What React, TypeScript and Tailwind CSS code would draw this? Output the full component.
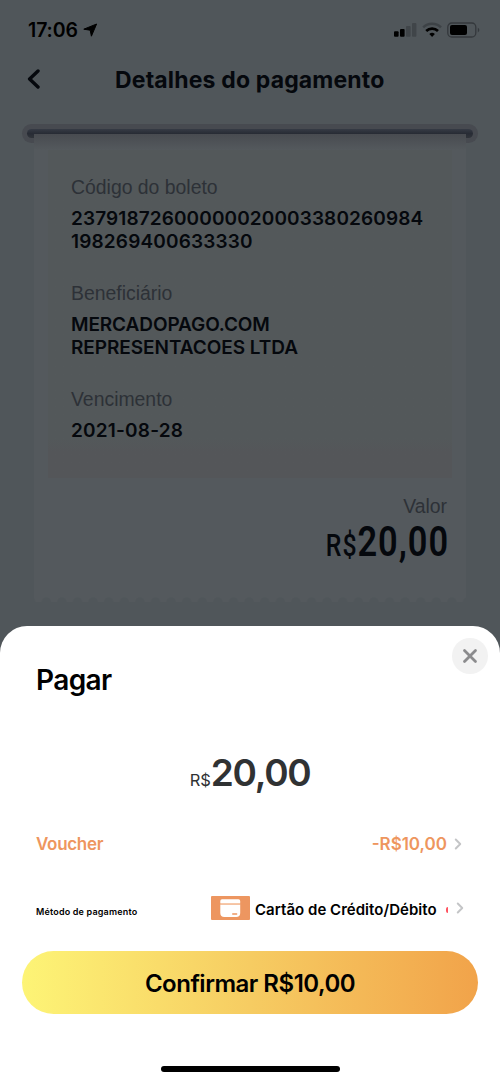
import { ChevronRight, X } from 'lucide-react';
import type { ReactNode } from 'react';

type FieldProps = {
  label: string;
  children: ReactNode;
};

function StatusBar() {
  return (
    <div className="flex h-[60px] items-center justify-between pl-7 pr-5">
      <div className="flex items-center">
        <span className="text-[19.5px] font-semibold leading-6 tracking-[-0.1px] text-black">17:06</span>
        <svg className="ml-[5px]" width="15" height="14" viewBox="0 0 15 14">
          <path d="M.8 6.2 13.6 1 8.4 13.2 7.2 7.2Z" fill="#000" stroke="#000" strokeWidth="1" strokeLinejoin="round" />
        </svg>
      </div>
      <svg width="87" height="16" viewBox="0 0 87 16">
        <rect x="1" y="9.3" width="4.6" height="5.4" rx="1" fill="#000" />
        <rect x="7" y="7" width="4.6" height="7.7" rx="1" fill="#000" />
        <rect x="13" y="4" width="4.6" height="10.7" rx="1" fill="#404549" />
        <rect x="19" y="1" width="4.4" height="13.7" rx="1" fill="#404549" />
        <path d="M30.2 5.4a12.8 12.8 0 0 1 17.8 0" fill="none" stroke="#3d4246" strokeWidth="2.5" />
        <path d="M33.2 9a8.6 8.6 0 0 1 11.8 0" fill="none" stroke="#000" strokeWidth="2.7" />
        <path d="M36.3 12.1a4 4 0 0 1 5.6 0L39.1 15Z" fill="#000" />
        <rect x="54.8" y="1" width="28" height="14" rx="4" fill="none" stroke="#34383c" strokeWidth="1.3" />
        <rect x="57" y="3.1" width="17" height="9.9" rx="2" fill="#000" />
        <path d="M84.8 5.8v4.6q1.6-.8 1.6-2.3t-1.6-2.3" fill="#34383c" />
      </svg>
    </div>
  );
}

function Field({ label, children }: FieldProps) {
  return (
    <div className="mb-[27px]">
      <div className="mb-[7px] h-[26px] font-['Liberation_Sans',sans-serif] text-[19.4px] leading-[26px] text-[#2d3137]">
        {label}
      </div>
      <div className="text-[19px] font-semibold leading-[23px] text-[#05080d]">{children}</div>
    </div>
  );
}

function Receipt() {
  return (
    <div className="mx-[22px] mt-[24px]">
      <div className="-mb-[9px] h-[19px] rounded-full bg-[#474a50] px-[5px] pt-[5px]">
        <div className="h-[9px] rounded-full bg-linear-to-b from-[#363b45] via-[#282c35] to-[#30343a]" />
      </div>
      <div className="relative mx-3 h-[468px] bg-[#54595d] px-[14px] pt-4">
        <div className="absolute inset-x-0 top-0 h-4 bg-linear-to-b from-[#484b50] to-transparent" />
        <div className="h-[328px] bg-linear-to-b from-[#53585a] from-88% to-[#545659] to-92% pl-[23px] pt-6">
          <Field label="Código do boleto">
            <div className="tracking-[0.11px]">23791872600000020003380260984</div>
            <div className="tracking-[0.17px]">198269400633330</div>
          </Field>
          <Field label="Beneficiário">
            <div className="tracking-[-0.1px]">MERCADOPAGO.COM</div>
            <div className="tracking-[-0.05px]">REPRESENTACOES LTDA</div>
          </Field>
          <Field label="Vencimento">
            <div className="tracking-[0.2px]">2021-08-28</div>
          </Field>
        </div>
        <div className="pr-[5px] text-right">
          <div className="mt-[15px] font-['Liberation_Sans',sans-serif] text-[19.4px] leading-[26px] text-[#2d3137]">
            Valor
          </div>
          <div className="-mr-[2px] origin-right scale-x-[0.8] font-[Roboto,sans-serif] text-[43px] font-semibold leading-[44px] tracking-[1.2px] text-[#05080d]">
            <span className="text-[31px] font-medium">R$</span>20,00
          </div>
        </div>
        <svg className="absolute bottom-0 left-0" width="432" height="6" viewBox="0 0 432 6">
          <defs>
            <pattern id="teeth" x="4.5" width="15.6" height="6" patternUnits="userSpaceOnUse">
              <circle cx="7.8" cy="6" r="4.8" fill="#50565a" />
            </pattern>
          </defs>
          <rect width="432" height="6" fill="url(#teeth)" />
        </svg>
      </div>
    </div>
  );
}

function CardIcon() {
  return (
    <svg width="39" height="24" viewBox="0 0 39 24">
      <rect width="39" height="24" rx="1" fill="#ed9660" />
      <path d="M9.3 7V5q0-1.7 1.7-1.7h16.5Q29.2 3.3 29.2 5v2z" fill="#fff" />
      <path d="M9.3 8.8h19.9V17q0 4-4 4H13.3q-4 0-4-4z" fill="#fff" />
      <path d="M9.3 7h19.9v1.8H9.3z" fill="#f7c9aa" />
      <path d="M21.7 18h4" stroke="#ed9660" strokeWidth="1.3" strokeLinecap="round" />
    </svg>
  );
}

function PaymentSheet() {
  return (
    <div className="relative h-[456px] rounded-t-[27px] bg-white">
      <button
        aria-label="Fechar"
        className="absolute right-3 top-3 flex size-9 items-center justify-center rounded-full bg-[#f2f2f2]"
      >
        <X size={22} strokeWidth={3} className="text-[#8b8b8d]" />
      </button>
      <h2 className="pl-9 pt-9 text-[28px] font-semibold leading-9 tracking-[-0.6px] text-black">Pagar</h2>
      <div className="mt-[51px] flex h-12 items-baseline justify-center text-[#303233]">
        <span className="text-[16.5px] leading-[48px]">R$</span>
        <span className="text-[37px] font-semibold leading-[48px] tracking-[-1.3px]">20,00</span>
      </div>
      <div className="mt-[36px] flex h-6 items-center justify-between pl-9 pr-[33px] text-[#ee965e]">
        <span className="text-[17px] font-semibold tracking-[-0.3px]">Voucher</span>
        <div className="flex items-center">
          <span className="text-[17px] font-semibold">-R$10,00</span>
          <ChevronRight size={18} strokeWidth={2.6} className="-mt-0.5 ml-[2px] text-[#c4c5c7]" />
        </div>
      </div>
      <div className="mt-[39px] flex h-6 items-center pl-9 pr-[31px]">
        <span className="w-[175px] pt-[8px] text-[9px] font-semibold tracking-[0.18px] text-black">Método de pagamento</span>
        <CardIcon />
        <span className="ml-[5px] whitespace-nowrap pt-[4px] text-[15px] font-semibold tracking-[0.03px] text-black">Cartão de Crédito/Débito</span>
        <div className="ml-auto flex items-center">
          <div className="mt-1 h-1.5 w-[2px] rounded-l-full bg-[#ff5360]" />
          <ChevronRight size={18} strokeWidth={2.6} className="ml-[3px] text-[#c4c5c7]" />
        </div>
      </div>
      <button className="mx-[22px] mt-[31px] flex h-[63px] w-[456px] items-center justify-center rounded-full bg-linear-to-r from-[#fdf476] via-[#f6cc62] to-[#f1a34a] pt-0.5 text-[24px] font-semibold tracking-[-0.5px] text-black">
        Confirmar R$10,00
      </button>
      <div className="mx-auto mt-[52px] h-1.5 w-[179px] rounded-full bg-black" />
    </div>
  );
}

export default function App() {
  return (
    <div className="h-[1082px] w-[500px] overflow-hidden bg-[#50565a] font-[Inter,sans-serif]">
      <div className="h-[626px]">
        <StatusBar />
        <div className="flex h-10 items-center pl-[27px]">
          <svg className="-mt-[3px]" width="13" height="20" viewBox="0 0 13 20">
            <path d="M11 2 2.6 10 11 18" fill="none" stroke="#05080d" strokeWidth="3.4" strokeLinecap="round" strokeLinejoin="round" />
          </svg>
          <h1 className="ml-[75px] text-[23px] font-bold tracking-[0.16px] text-[#05080d]">Detalhes do pagamento</h1>
        </div>
        <Receipt />
      </div>
      <PaymentSheet />
    </div>
  );
}
